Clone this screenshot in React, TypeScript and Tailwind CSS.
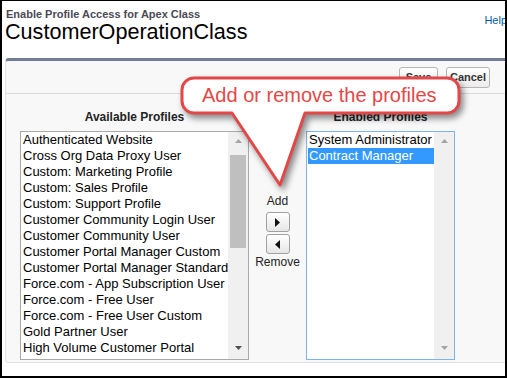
const available = [
  "Authenticated Website",
  "Cross Org Data Proxy User",
  "Custom: Marketing Profile",
  "Custom: Sales Profile",
  "Custom: Support Profile",
  "Customer Community Login User",
  "Customer Community User",
  "Customer Portal Manager Custom",
  "Customer Portal Manager Standard",
  "Force.com - App Subscription User",
  "Force.com - Free User",
  "Force.com - Free User Custom",
  "Gold Partner User",
  "High Volume Customer Portal",
];

const enabled = ["System Administrator", "Contract Manager"];

const UpArrow = ({ color }: { color: string }) => (
  <svg width="7" height="4" viewBox="0 0 7 4">
    <path d="M0 4 L3.5 0 L7 4 Z" fill={color} />
  </svg>
);

const DownArrow = ({ color }: { color: string }) => (
  <svg width="7" height="4" viewBox="0 0 7 4">
    <path d="M0 0 L3.5 4 L7 0 Z" fill={color} />
  </svg>
);

function Scrollbar({ thumb }: { thumb: boolean }) {
  return (
    <div className="w-[20px] bg-[#f0f0f0] flex flex-col items-center pt-[7px] pb-[9px]">
      <UpArrow color="#a3a3a3" />
      {thumb && <div className="mt-[12px] w-[16px] h-[93px] bg-[#bfbfbf]" />}
      <div className="flex-1" />
      <DownArrow color={thumb ? "#505050" : "#a3a3a3"} />
    </div>
  );
}

export default function App() {
  return (
    <div className="relative w-[507px] h-[378px] overflow-hidden bg-white font-['Liberation_Sans',Arial,sans-serif]">
      {/* Header */}
      <div className="h-[58px] flex justify-between pt-[8px] pl-[5px]">
        <div>
          <div className="text-[11px] leading-[12px] font-bold text-[#4a4a56] pl-[1px]">
            Enable Profile Access for Apex Class
          </div>
          <div className="text-[21.6px] leading-[24px] text-black">CustomerOperationClass</div>
        </div>
        <a className="text-[11px] leading-[13px] text-[#015ba7] mt-[6px]">Help</a>
      </div>

      {/* Page block */}
      <div className="ml-[5px] w-[520px] bg-[#f8f8f8] border-t-[3px] border-t-[#737e96] border-l border-l-[#e3e3e3] border-b border-b-[#e0e0e0] rounded-tl-[4px] rounded-bl-[4px]">
        <div className="h-[33px] border-b border-[#dbdbdb] flex items-start pt-[6px] pl-[393px] gap-[8px]">
          <button className="w-[39px] h-[21px] rounded-[3px] border border-[#b5b5b5] bg-gradient-to-b from-white to-[#ececec] text-[11px] font-bold text-[#333]">
            Save
          </button>
          <button className="w-[44px] h-[21px] rounded-[3px] border border-[#b5b5b5] bg-gradient-to-b from-white to-[#ececec] text-[11px] font-bold text-[#333]">
            Cancel
          </button>
        </div>

        <div className="flex pl-[14px] pt-[16px] pb-[2px]">
          {/* Available */}
          <div className="w-[229px]">
            <div className="text-[12px] leading-[14px] font-bold text-[#222] text-center mb-[7px]">
              Available Profiles
            </div>
            <div className="h-[229px] border border-[#a9a9a9] bg-white flex">
              <div className="flex-1 pt-[0px] overflow-hidden">
                {available.map((p) => (
                  <div key={p} className="text-[13px] leading-[16px] pl-[2px] text-black whitespace-nowrap">
                    {p}
                  </div>
                ))}
              </div>
              <Scrollbar thumb />
            </div>
          </div>

          {/* Add / Remove */}
          <div className="w-[57px] flex flex-col items-center pt-[84px] text-[12px] leading-[14px] text-[#222]">
            <div>Add</div>
            <button className="mt-[4px] w-[24px] h-[20px] rounded-[3px] border border-[#a0a0a0] bg-gradient-to-b from-white to-[#e6e6e6] flex items-center justify-center">
              <svg width="5" height="9" viewBox="0 0 5 9">
                <path d="M0 0 L5 4.5 L0 9 Z" fill="#111" />
              </svg>
            </button>
            <button className="mt-[2px] w-[24px] h-[20px] rounded-[3px] border border-[#a0a0a0] bg-gradient-to-b from-white to-[#e6e6e6] flex items-center justify-center">
              <svg width="5" height="9" viewBox="0 0 5 9">
                <path d="M5 0 L0 4.5 L5 9 Z" fill="#111" />
              </svg>
            </button>
            <div className="mt-[1px]">Remove</div>
          </div>

          {/* Enabled */}
          <div className="w-[149px]">
            <div className="text-[12px] leading-[14px] font-bold text-[#222] text-center mb-[7px]">
              Enabled Profiles
            </div>
            <div className="h-[229px] border border-[#7eb4ea] bg-white flex">
              <div className="flex-1 pl-[1px] overflow-hidden">
                {enabled.map((p, i) => (
                  <div
                    key={p}
                    className={`text-[13px] leading-[16px] pl-[1px] whitespace-nowrap ${
                      i === 1 ? "bg-[#3399ff] text-white" : "text-black"
                    }`}
                  >
                    {p}
                  </div>
                ))}
              </div>
              <Scrollbar thumb={false} />
            </div>
          </div>
        </div>
      </div>

      {/* Callout */}
      <div className="absolute left-[176px] top-[72px] w-[300px] h-[125px]">
        <svg
          width="300"
          height="125"
          viewBox="0 0 300 125"
          className="drop-shadow-[3px_4px_3px_rgba(0,0,0,0.45)]"
        >
          <path
            d="M18 6 H271 A12 12 0 0 1 283 18 V29 A12 12 0 0 1 271 41 H129 L104 113 L56 41 H18 A12 12 0 0 1 6 29 V18 A12 12 0 0 1 18 6 Z"
            fill="white"
            stroke="#e34848"
            strokeWidth="3"
            strokeLinejoin="round"
          />
        </svg>
        <span className="absolute left-[26px] top-[11px] text-[20px] leading-[24px] text-[#e34848] whitespace-nowrap">
          Add or remove the profiles
        </span>
      </div>

      {/* Screenshot frame */}
      <div className="pointer-events-none absolute inset-0 border-t border-x-2 border-b-2 border-black" />
    </div>
  );
}
